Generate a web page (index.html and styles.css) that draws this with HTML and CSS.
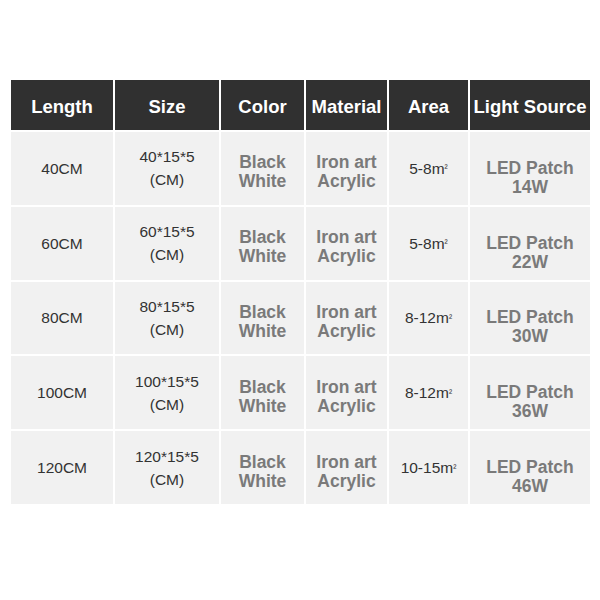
FILE: index.html
```html
<!DOCTYPE html>
<html>
<head>
<meta charset="utf-8">
<link rel="stylesheet" href="styles.css">
</head>
<body>
<div class="page">
  <div class="table">
    <div class="th">Length</div>
    <div class="th">Size</div>
    <div class="th">Color</div>
    <div class="th">Material</div>
    <div class="th">Area</div>
    <div class="th">Light Source</div>

    <div class="td reg">40CM</div>
    <div class="td reg">40*15*5<br>(CM)</div>
    <div class="td bold">Black<br>White</div>
    <div class="td bold">Iron art<br>Acrylic</div>
    <div class="td reg">5-8m<sup>²</sup></div>
    <div class="td bold led">LED Patch<br>14W</div>

    <div class="td reg">60CM</div>
    <div class="td reg">60*15*5<br>(CM)</div>
    <div class="td bold">Black<br>White</div>
    <div class="td bold">Iron art<br>Acrylic</div>
    <div class="td reg">5-8m<sup>²</sup></div>
    <div class="td bold led">LED Patch<br>22W</div>

    <div class="td reg">80CM</div>
    <div class="td reg">80*15*5<br>(CM)</div>
    <div class="td bold">Black<br>White</div>
    <div class="td bold">Iron art<br>Acrylic</div>
    <div class="td reg">8-12m<sup>²</sup></div>
    <div class="td bold led">LED Patch<br>30W</div>

    <div class="td reg">100CM</div>
    <div class="td reg">100*15*5<br>(CM)</div>
    <div class="td bold">Black<br>White</div>
    <div class="td bold">Iron art<br>Acrylic</div>
    <div class="td reg">8-12m<sup>²</sup></div>
    <div class="td bold led">LED Patch<br>36W</div>

    <div class="td reg">120CM</div>
    <div class="td reg">120*15*5<br>(CM)</div>
    <div class="td bold">Black<br>White</div>
    <div class="td bold">Iron art<br>Acrylic</div>
    <div class="td reg">10-15m<sup>²</sup></div>
    <div class="td bold led">LED Patch<br>46W</div>
  </div>
</div>
</body>
</html>
```

FILE: styles.css
```css
html, body {
  margin: 0;
  padding: 0;
  background: #ffffff;
}
.page {
  width: 600px;
  height: 600px;
  padding: 80px 0 0 11px;
  box-sizing: border-box;
}
.table {
  display: grid;
  grid-template-columns: 102px 104px 83px 81px 79px 120px;
  grid-template-rows: 50px repeat(5, 72.8px);
  gap: 2px;
  background: #ffffff;
  width: 579px;
}
.th {
  background: #303030;
  color: #ffffff;
  font-family: "Liberation Sans", Arial, sans-serif;
  font-weight: 700;
  font-size: 18.5px;
  display: flex;
  align-items: center;
  justify-content: center;
  white-space: nowrap;
  padding-top: 4px;
  box-sizing: border-box;
}
.td {
  background: #f1f1f1;
  display: flex;
  align-items: center;
  justify-content: center;
  text-align: center;
  font-family: "Liberation Sans", Arial, sans-serif;
  white-space: nowrap;
  box-sizing: border-box;
}
.reg {
  color: #333333;
  font-size: 15.5px;
  line-height: 23px;
}
.bold {
  color: #7a7a7a;
  font-weight: 700;
  font-size: 17.5px;
  line-height: 19px;
  padding-top: 8px;
}
.led {
  line-height: 19px;
  padding-top: 19px;
}
sup {
  font-size: 9.5px;
  vertical-align: top;
  line-height: 12px;
}
```
